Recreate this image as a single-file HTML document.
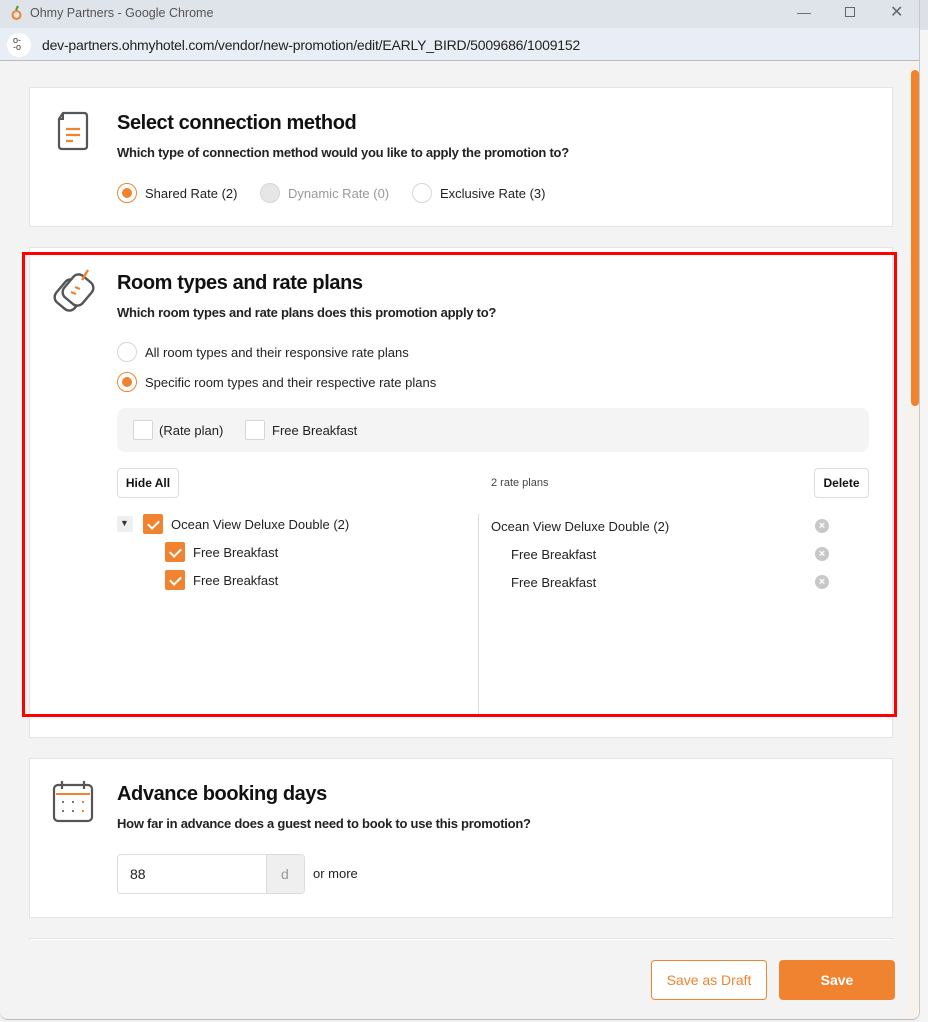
<!DOCTYPE html>
<html><head><meta charset="utf-8"><style>
*{box-sizing:border-box;margin:0;padding:0}
body{width:928px;height:1022px;overflow:hidden;background:#f1f1f1;font-family:"Liberation Sans",sans-serif;position:relative;color:#111}
.abs{position:absolute}
.card{position:absolute;left:29px;width:864px;background:#fff;border:1px solid #e4e4e4}
.h{position:absolute;left:117px;font-size:20px;font-weight:bold;color:#111;letter-spacing:-0.4px}
.s{position:absolute;left:117px;font-size:13px;font-weight:bold;color:#222;letter-spacing:-0.25px}
.t{position:absolute;font-size:13px;color:#222;white-space:nowrap}
.radio{position:absolute;width:20px;height:20px;border-radius:50%;border:1px solid #d6d6d6;background:#fff}
.radio.on{border-color:#f08330}
.radio.on::after{content:"";position:absolute;left:4px;top:4px;width:10px;height:10px;border-radius:50%;background:#f08330}
.cb{position:absolute;width:20px;height:20px;border:1px solid #d6d6d6;background:#fff;border-radius:2px}
.cb.on{background:#f08330;border-color:#f08330}
.cb.on::after{content:"";position:absolute;left:6px;top:3px;width:5px;height:9px;border:solid #fff;border-width:0 2px 2px 0;transform:rotate(45deg)}
.x{position:absolute;width:14px;height:14px;border-radius:50%;background:#c8c8c8;color:#fff;font-size:11px;line-height:14px;text-align:center;font-weight:bold}
.btn{position:absolute;border:1px solid #ddd;border-radius:4px;background:#fff;font-size:12px;font-weight:bold;text-align:center;color:#111}
</style></head><body>
<div class="abs" style="left:0;top:85px;width:6px;height:40px;background:#333"></div>
<div class="abs" style="left:0;top:205px;width:6px;height:25px;background:#f08330"></div>
<div class="abs" style="left:919px;top:0;width:9px;height:1022px;background:#f5f5f5"></div>
<div class="abs" style="left:919px;top:0;width:9px;height:30px;background:#dde1e7"></div>
<div class="abs" style="left:0;top:0;width:920px;height:1020px;background:#f3f3f3;border-right:1px solid #c8c8c8;border-bottom:1px solid #bbb;border-radius:0 0 8px 8px;overflow:hidden">
 <div class="abs" style="left:0;top:0;width:920px;height:28px;background:#dfe3ea"></div>
 <div class="abs" style="left:11px;top:5px;width:11px;height:14px"><svg width="11" height="16"><circle cx="5.5" cy="10" r="4" fill="none" stroke="#f08330" stroke-width="2"/><path d="M5 5 L7 1" stroke="#4a9a3a" stroke-width="2"/></svg></div>
 <div class="t" style="left:30px;top:6px;font-size:12.5px;color:#555">Ohmy Partners - Google Chrome</div>
 <div class="t" style="left:797px;top:4px;font-size:14px;color:#666">—</div>
 <div class="abs" style="left:845px;top:7px;width:10px;height:10px;border:1px solid #666"></div>
 <div class="t" style="left:890px;top:2px;font-size:16px;color:#666">✕</div>
 <div class="abs" style="left:0;top:28px;width:920px;height:33px;background:#e9eef6;border-bottom:1px solid #bbb"></div>
 <div class="abs" style="left:7px;top:33px;width:24px;height:24px;border-radius:50%;background:#fff"></div>
 <div class="t" style="left:13px;top:37px;font-size:9px;color:#333;line-height:7px">o-<br>-o</div>
 <div class="t" style="left:42px;top:37px;font-size:14px;color:#222;letter-spacing:-0.2px">dev-partners.ohmyhotel.com/vendor/new-promotion/edit/EARLY_BIRD/5009686/1009152</div>
 <div class="abs" style="left:908px;top:62px;width:12px;height:958px;background:#f8f2ec"></div>
 <div class="abs" style="left:911px;top:70px;width:8px;height:336px;border-radius:4px;background:#f08330"></div>
</div>

<div class="card" style="top:87px;height:140px"></div>
<svg class="abs" style="left:53px;top:110px" width="38" height="42"><path d="M10 3 H31 Q34 3 34 6 V36 Q34 39 31 39 H9 Q6 39 6 36 V9 Z" fill="none" stroke="#555" stroke-width="2.2" stroke-linejoin="round"/><path d="M6 9 H10 V4" fill="none" stroke="#555" stroke-width="2"/><path d="M13 19 H27 M13 25 H27 M13 31 H20" stroke="#f08330" stroke-width="2.2"/></svg>
<div class="h" style="top:112px">Select connection method</div>
<div class="s" style="top:145px">Which type of connection method would you like to apply the promotion to?</div>
<div class="radio on" style="left:117px;top:183px"></div><div class="t" style="left:145px;top:186px">Shared Rate (2)</div>
<div class="radio" style="left:260px;top:183px;background:#e6e6e6"></div><div class="t" style="left:288px;top:186px;color:#999">Dynamic Rate (0)</div>
<div class="radio" style="left:412px;top:183px"></div><div class="t" style="left:440px;top:186px">Exclusive Rate (3)</div>

<div class="card" style="top:247px;height:491px"></div>
<div class="abs" style="left:22px;top:252px;width:875px;height:465px;border:3px solid #ff0000"></div>
<svg class="abs" style="left:50px;top:268px" width="46" height="44"><rect x="8" y="13" width="24" height="28" rx="7" transform="rotate(40 20 27)" fill="none" stroke="#555" stroke-width="2.4"/><rect x="16" y="8" width="24" height="28" rx="7" transform="rotate(40 28 22)" fill="#fff" stroke="#555" stroke-width="2.4"/><path d="M32 12 L38 2" stroke="#f08330" stroke-width="2.4"/><path d="M25 19 L30 21 M21 24 L26 26" stroke="#f08330" stroke-width="2.2"/></svg>
<div class="h" style="top:272px">Room types and rate plans</div>
<div class="s" style="top:305px">Which room types and rate plans does this promotion apply to?</div>
<div class="radio" style="left:117px;top:342px"></div><div class="t" style="left:145px;top:345px">All room types and their responsive rate plans</div>
<div class="radio on" style="left:117px;top:372px"></div><div class="t" style="left:145px;top:375px">Specific room types and their respective rate plans</div>
<div class="abs" style="left:117px;top:408px;width:752px;height:44px;background:#f4f4f4;border-radius:8px"></div>
<div class="cb" style="left:133px;top:420px"></div><div class="t" style="left:159px;top:423px">(Rate plan)</div>
<div class="cb" style="left:245px;top:420px"></div><div class="t" style="left:272px;top:423px">Free Breakfast</div>
<div class="btn" style="left:117px;top:468px;width:62px;height:30px;line-height:28px">Hide All</div>
<div class="t" style="left:491px;top:477px;font-size:11px;color:#444">2 rate plans</div>
<div class="btn" style="left:814px;top:468px;width:55px;height:30px;line-height:28px">Delete</div>
<div class="abs" style="left:117px;top:516px;width:16px;height:16px;background:#efefef;border-radius:2px"></div>
<div class="t" style="left:120px;top:518px;font-size:9px;color:#333">▼</div>
<div class="cb on" style="left:143px;top:514px"></div><div class="t" style="left:171px;top:517px">Ocean View Deluxe Double (2)</div>
<div class="cb on" style="left:165px;top:542px"></div><div class="t" style="left:193px;top:545px">Free Breakfast</div>
<div class="cb on" style="left:165px;top:570px"></div><div class="t" style="left:193px;top:573px">Free Breakfast</div>
<div class="abs" style="left:478px;top:514px;width:1px;height:200px;background:#ddd"></div>
<div class="t" style="left:491px;top:519px">Ocean View Deluxe Double (2)</div>
<div class="t" style="left:511px;top:547px">Free Breakfast</div>
<div class="t" style="left:511px;top:575px">Free Breakfast</div>
<div class="x" style="left:815px;top:519px">×</div>
<div class="x" style="left:815px;top:547px">×</div>
<div class="x" style="left:815px;top:575px">×</div>

<div class="card" style="top:758px;height:160px"></div>
<svg class="abs" style="left:52px;top:780px" width="42" height="44"><rect x="2" y="5" width="38" height="36" rx="4" fill="none" stroke="#555" stroke-width="2.2"/><path d="M10 1 V9 M32 1 V9" stroke="#555" stroke-width="2.2"/><path d="M4 14 H38" stroke="#f08330" stroke-width="2"/><g fill="#777"><rect x="10" y="21" width="2" height="2"/><rect x="20" y="21" width="2" height="2"/><rect x="10" y="30" width="2" height="2"/><rect x="20" y="30" width="2" height="2"/></g><g fill="#f08330"><rect x="30" y="21" width="2" height="2"/><rect x="30" y="30" width="2" height="2"/></g></svg>
<div class="h" style="top:783px">Advance booking days</div>
<div class="s" style="top:816px">How far in advance does a guest need to book to use this promotion?</div>
<div class="abs" style="left:117px;top:854px;width:188px;height:40px;border:1px solid #ddd;border-radius:4px;background:#fff;overflow:hidden"><div class="abs" style="left:148px;top:0;width:40px;height:40px;background:#efefef;border-left:1px solid #ddd"></div></div>
<div class="t" style="left:130px;top:866px;font-size:14px">88</div>
<div class="t" style="left:281px;top:866px;color:#999;font-size:14px">d</div>
<div class="t" style="left:313px;top:866px">or more</div>

<div class="card" style="top:938px;height:20px;border-bottom:none"></div>
<div class="abs" style="left:29px;top:940px;width:864px;height:78px;background:#f3f3f3"></div>
<div class="abs" style="left:651px;top:960px;width:116px;height:40px;border:1px solid #f08330;border-radius:4px;background:#fff;color:#f08330;font-size:14px;text-align:center;line-height:38px">Save as Draft</div>
<div class="abs" style="left:779px;top:960px;width:116px;height:40px;border-radius:4px;background:#f08330;color:#fff;font-size:14px;font-weight:bold;text-align:center;line-height:40px">Save</div>
</body></html>
